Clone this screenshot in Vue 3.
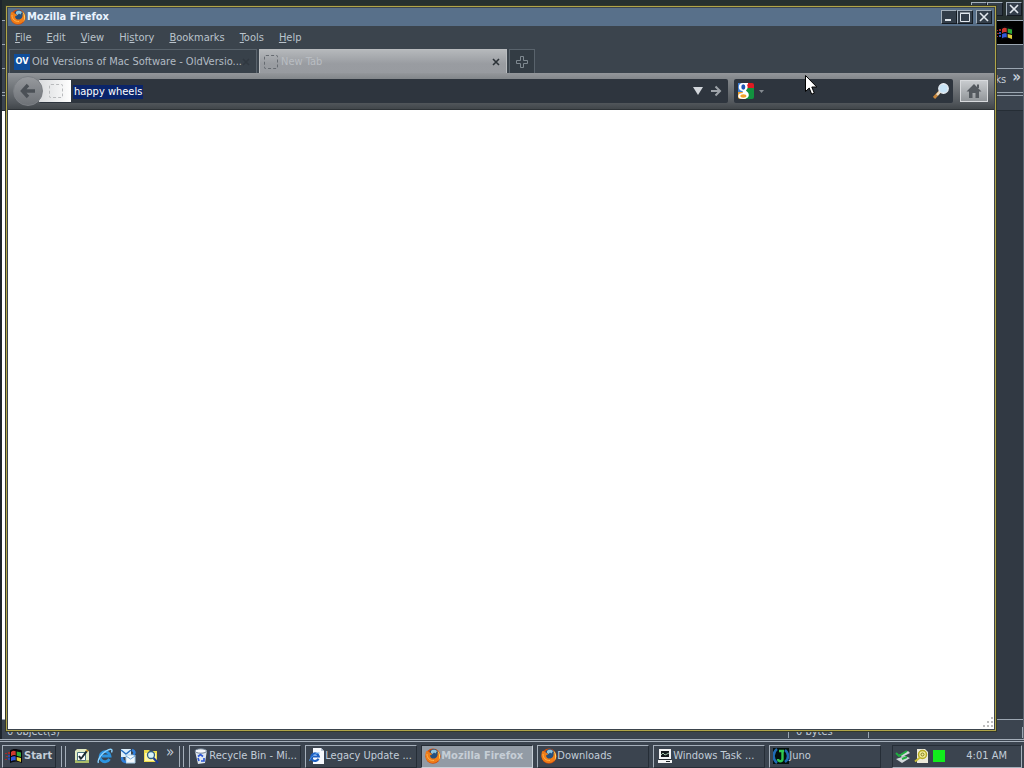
<script setup>
const menus = [
  { pre: '', key: 'F', post: 'ile' },
  { pre: '', key: 'E', post: 'dit' },
  { pre: '', key: 'V', post: 'iew' },
  { pre: 'Hi', key: 's', post: 'tory' },
  { pre: '', key: 'B', post: 'ookmarks' },
  { pre: '', key: 'T', post: 'ools' },
  { pre: '', key: 'H', post: 'elp' },
]
const tasks = [
  { icon: 'bin', label: 'Recycle Bin - Mi...' },
  { icon: 'iepage', label: 'Legacy Update ...' },
  { icon: 'firefox', label: 'Mozilla Firefox', active: true },
  { icon: 'firefox', label: 'Downloads' },
  { icon: 'computer', label: 'Windows Task ...' },
  { icon: 'juno', label: 'Juno' },
]
const quick = [
  { icon: 'desktop', label: 'Show Desktop' },
  { icon: 'ie', label: 'Internet Explorer' },
  { icon: 'mail', label: 'Outlook Express' },
  { icon: 'search', label: 'Search' },
]
</script>

<template>
  <svg class="defs" aria-hidden="true">
    <symbol id="firefox" viewBox="0 0 16 16">
      <circle cx="8" cy="8.200" r="7.600" fill="#cf4a08" />
      <path d="M8.500 1a6 6 0 0 1 4 9.800C9.500 13 4.500 11 4 7.500 3.600 4 5.500 1.300 8.500 1z" fill="#24507e" />
      <path d="M6 3c1-1.500 4-2 6 0L10.500 5.500 9 4.500 7.500 6 6 5z" fill="#8fc4dc" />
      <path d="M1.200 3c.7.500 1.300.4 1.900-.3.2 1 .9 1.700 2 1.800l2.200 1.700-2.300 1.300c.2 2.600 2.300 3.600 4.700 2.900C12.500 9.500 13 7 12.300 4.300c2.500 2 2.900 6 .7 8.500-3.500 3.500-9.300 2.600-11.500-1.300C.2 9 .2 6 1.200 3z" fill="#f07d18" />
      <path d="M12.300 2.500c3.300 2.500 3.800 7.300 1 10.500 1-2.500 1.200-5.500 0-8z" fill="#ffd35a" />
      <path d="M2 6c0 4 3 7 7 6.500" fill="none" stroke="#ffb24a" />
    </symbol>
    <symbol id="flag" viewBox="0 0 18 16">
      <path d="M0 5h2v1H0zM1 8h2v1H1zM0 11h2v1H0zM3 4h2v2H3z" fill="#a42a2a" />
      <path d="M3 7h2v2H3zM3 10h2v2H3z" fill="#2b4bb0" />
      <path d="M5 2.500C8 .500 11 .500 17 2.500V15C13 13 9 13 5 15z" fill="#06060a" />
      <path d="M6 4c1.700-1.500 3.200-1.600 4.700-.8V7.400C9.200 6.800 7.700 7 6 8.200z" fill="#cf3a2e" />
      <path d="M11.700 3.500l4.300 1V9l-4.300-1.200z" fill="#2fa83a" />
      <path d="M6 9.200c1.700-1.100 3.200-1.300 4.700-.7v4c-1.500-.5-3-.3-4.700.8z" fill="#3158d8" />
      <path d="M11.700 8.900l4.300 1v4l-4.300-1.300z" fill="#e2cf3a" />
    </symbol>
    <symbol id="desktop" viewBox="0 0 16 16">
      <path d="M1 3l2-2h11l1 3v11H1z" fill="#e3ecc4" />
      <path d="M1 12h14v3H1z" fill="#a9bb6a" />
      <path d="M3.500 4.500h8v8h-8z" fill="#fff" stroke="#4b7480" />
      <path d="M5.500 11.500L13 1l2 1-7.500 9.500z" fill="#1c2a30" />
      <path d="M12 2l2 1.500" stroke="#e4aa30" stroke-width="1.500" />
      <path d="M5 8l2 3" stroke="#1c2a30" stroke-width="2" />
    </symbol>
    <symbol id="ie" viewBox="0 0 16 16">
      <path d="M12.500 11A5 5 0 1 1 13 8H5" fill="none" stroke="#2c94e0" stroke-width="2.800" />
      <path d="M1.500 14.800C0 12.500 4 6 9 3s7-2 5.500 1.500" fill="none" stroke="#8bd2ff" stroke-width="1.400" />
    </symbol>
    <symbol id="mail" viewBox="0 0 16 16">
      <path d="M1 1h10v8H1z" fill="#dceefb" />
      <path d="M1 2l5 4 5-4" fill="none" stroke="#276fc2" stroke-width="1.500" />
      <path d="M6 7h9v8H6z" fill="#f2f8fd" stroke="#a9cde8" />
      <path d="M6 8l4.500 3L15 8" fill="none" stroke="#6ea8dc" />
      <path d="M12 2c3 1 3 3 1.500 5M2 9c0 3 1 5 4 5" fill="none" stroke="#2f7fdc" stroke-width="2.500" />
    </symbol>
    <symbol id="search" viewBox="0 0 16 16">
      <path d="M1 2h5l1 1h7v11H1z" fill="#eedc4c" />
      <path d="M2 5h11v8H2z" fill="#fff7a6" />
      <circle cx="8" cy="7" r="3.500" fill="#d7f3fb" stroke="#2f5e80" stroke-width="1.300" />
      <path d="M10.500 10l4.500 5" stroke="#1c3b94" stroke-width="2.200" />
    </symbol>
    <symbol id="bin" viewBox="0 0 16 16">
      <path d="M2 3l12-1-2 13-7 1z" fill="#dfe7ee" />
      <ellipse cx="7.800" cy="3" rx="5.800" ry="2.200" fill="#f5f7fa" stroke="#6c7d8f" />
      <path d="M5 8.500l2.500-2L10 8.500M11 10v3H8M6 13l-1-3" fill="none" stroke="#2b56d4" stroke-width="1.700" />
    </symbol>
    <symbol id="iepage" viewBox="0 0 16 16">
      <path d="M4 0h8l3 3v13H4z" fill="#f6f9fd" />
      <path d="M12 0v3h3" fill="#b9c7d8" />
      <path d="M9.500 10.800A3.800 3.800 0 1 1 9.800 8.500H3.500" fill="none" stroke="#1d5fc2" stroke-width="2.200" />
      <path d="M.8 13C-.2 11 6 4.500 10.500 5" fill="none" stroke="#4f9df0" />
    </symbol>
    <symbol id="computer" viewBox="0 0 16 16">
      <path d="M2 1h12v10H2zM1 12h14v3H1z" fill="#f2f3f4" />
      <path d="M4 3h8v6H4z" fill="#14181c" />
      <path d="M4 7l2-2 2 2 4-2" fill="none" stroke="#9ec0a6" />
      <path d="M2 11h12v1H2zM9 13h4v1H9z" fill="#22272c" />
    </symbol>
    <symbol id="juno" viewBox="0 0 16 16">
      <path d="M0 0h16v16H0z" fill="#04100c" />
      <path d="M4 1C0 4-1 11 4 15M12 2c4 3 4 9 0 12" fill="none" stroke="#1f6bb5" stroke-width="2.500" />
      <path d="M6 3h5M9.500 3v8c0 3-4.500 3-4.500 0" fill="none" stroke="#30c94f" stroke-width="2.400" />
    </symbol>
  </svg>

  <div class="desktop">
    <main class="stage">
      <section class="back" aria-label="Recycle Bin">
        <header class="back-title">
          <button class="cap" aria-label="Minimize Recycle Bin"></button>
          <button class="cap" aria-label="Maximize Recycle Bin"></button>
          <button class="cap last" aria-label="Close Recycle Bin">
            <svg viewBox="0 0 10 10" width="10" height="10"><path d="M1 1l8 8M9 1L1 9" stroke="#e2e8ee" stroke-width="1.600" /></svg>
          </button>
        </header>
        <div class="back-menu">
          <span class="throbber"><svg width="18" height="16"><use href="#flag" /></svg></span>
        </div>
        <div class="back-row"></div>
        <div class="back-links"><span>ks</span><b>»</b></div>
        <div class="back-address"></div>
        <div class="back-body"></div>
        <footer class="back-status"><span>0 object(s)</span><span>0 bytes</span><span></span></footer>
      </section>

      <section class="firefox" aria-label="Mozilla Firefox">
        <header class="title">
          <svg width="16" height="16"><use href="#firefox" /></svg>
          <h1>Mozilla Firefox</h1>
          <button class="cap" aria-label="Minimize"><svg viewBox="0 0 10 10" width="10" height="10"><path d="M1 8h6" stroke="#e2e8ee" stroke-width="2" /></svg></button>
          <button class="cap" aria-label="Maximize"><svg viewBox="0 0 10 10" width="10" height="10"><path d="M.5 1.500h9v8h-9zM0 1h10" fill="none" stroke="#e2e8ee" /></svg></button>
          <button class="cap last" aria-label="Close"><svg viewBox="0 0 10 10" width="10" height="10"><path d="M1 1l8 8M9 1L1 9" stroke="#e2e8ee" stroke-width="1.600" /></svg></button>
        </header>
        <nav class="menus">
          <button v-for="m in menus" :key="m.post">{{ m.pre }}<u>{{ m.key }}</u>{{ m.post }}</button>
        </nav>
        <div class="tabs">
          <div class="tab">
            <span class="ov">OV</span>
            <button class="tab-name">Old Versions of Mac Software - OldVersio...</button>
            <button class="tab-close" aria-label="Close tab"><svg viewBox="0 0 8 8" width="8" height="8"><path d="M1 1l6 6M7 1L1 7" stroke="#303840" stroke-width="1.500" /></svg></button>
          </div>
          <div class="tab current">
            <span class="blank"></span>
            <button class="tab-name">New Tab</button>
            <button class="tab-close" aria-label="Close tab"><svg viewBox="0 0 8 8" width="8" height="8"><path d="M1 1l6 6M7 1L1 7" stroke="#2c3238" stroke-width="1.600" /></svg></button>
          </div>
          <button class="newtab" aria-label="Open a new tab"><svg viewBox="0 0 12 12" width="12" height="12"><path d="M4.500.500h3v4h4v3h-4v4h-3v-4h-4v-3h4z" fill="none" stroke="#7f8990" /></svg></button>
        </div>
        <div class="toolbar">
          <button class="back-btn" aria-label="Back"><svg viewBox="0 0 16 16" width="16" height="16"><path d="M8 2L2.500 8 8 14M3 8h12" fill="none" stroke="#4b5056" stroke-width="3.400" /></svg></button>
          <div class="url">
            <span class="identity"><span class="blank"></span></span>
            <label class="field"><span class="picked">happy wheels</span><input aria-label="Address" /></label>
            <button class="plain" aria-label="Show history"><svg viewBox="0 0 10 8" width="10" height="8"><path d="M0 0h10L5 8z" fill="#d3d7dc" /></svg></button>
            <button class="plain go" aria-label="Go"><svg viewBox="0 0 12 12" width="12" height="12"><path d="M1 6h9M5.500 1.500L10 6l-4.500 4.500" fill="none" stroke="#9ea3a9" stroke-width="2" /></svg></button>
          </div>
          <div class="searchbox">
            <button class="plain engine" aria-label="Google">
              <svg viewBox="0 0 16 16" width="16" height="16">
                <path d="M0 0h9v9H0z" fill="#3f7fd6" />
                <path d="M9 0h5a2 2 0 0 1 2 2v3H9z" fill="#e01b22" />
                <path d="M8 5h8v9a2 2 0 0 1-2 2H8z" fill="#12923f" />
                <path d="M0 9h8v7H2a2 2 0 0 1-2-2z" fill="#f0a32c" />
                <path d="M10 0H5C2 0 .8 2 .8 4.200c0 2.300 1.700 3.800 4 3.800-.5 1 0 1.600.5 2C2 10 .2 11.200.2 13.200.2 15 2 16 5 16c3.500 0 5.800-1.600 5.800-4 0-1.900-1-2.800-2.200-3.700-.9-.7-.6-1.200.1-1.800C10 5.400 10 3 8.700 1.500H10z" fill="#fff" />
                <ellipse cx="5.300" cy="4" rx="2" ry="2.700" fill="#1f55b4" />
                <ellipse cx="5.400" cy="13" rx="3" ry="1.700" fill="#f0a32c" />
              </svg>
              <svg viewBox="0 0 5 3" width="5" height="3"><path d="M0 0h5L2.500 3z" fill="#858b91" /></svg>
            </button>
            <input aria-label="Search" />
            <button class="plain" aria-label="Go search"><svg viewBox="0 0 16 16" width="16" height="16"><path d="M6.500 9L1 15" stroke="#c7863c" stroke-width="3" /><path d="M7 8.500L4 12" stroke="#e8ddc8" stroke-width="2.500" /><circle cx="10.500" cy="5.500" r="4.700" fill="#c6e3f6" stroke="#e6edf3" stroke-width="1.400" /></svg></button>
          </div>
          <button class="home" aria-label="Home"><svg viewBox="0 0 16 16" width="16" height="16"><path d="M8 1l7.500 7.500H13V15H9.500v-5h-3v5H3V8.500H.5zM11 1.500h2V5h-2z" fill="#54595f" /></svg></button>
        </div>
        <article class="page">
          <svg viewBox="0 0 12 12" width="12" height="12"><path d="M9 0h2v2H9zM5 4h2v2H5zM9 4h2v2H9zM1 8h2v2H1zM5 8h2v2H5zM9 8h2v2H9z" fill="#bdbdbd" /></svg>
        </article>
      </section>

      <svg class="pointer" viewBox="0 0 12 20" width="12" height="20"><path d="M.5.500v16l3.700-3.500 2.500 6.200 2.600-1.100L6.800 12h5z" fill="#fff" stroke="#000" /></svg>
    </main>

    <footer class="taskbar">
      <button class="start"><svg width="18" height="16"><use href="#flag" /></svg>Start</button>
      <span class="grip"></span>
      <nav class="quick">
        <button v-for="q in quick" :key="q.icon" class="plain" :aria-label="q.label"><svg width="16" height="16"><use :href="'#' + q.icon" /></svg></button>
        <button class="plain more" aria-label="More">»</button>
      </nav>
      <span class="grip"></span>
      <nav class="tasks">
        <button v-for="t in tasks" :key="t.label" class="task" :class="{ active: t.active }">
          <svg width="16" height="16"><use :href="'#' + t.icon" /></svg><span>{{ t.label }}</span>
        </button>
      </nav>
      <div class="tray">
        <svg viewBox="0 0 16 16" width="16" height="16"><path d="M1 11l9-3 5 2-8 5zM4 7l9-4 2 2-8 4z" fill="#d3d9dc" /><path d="M1 5l3 3 8-5M7 11l5-2" fill="none" stroke="#1fae3f" stroke-width="2" /></svg>
        <svg viewBox="0 0 16 16" width="16" height="16"><path d="M3 1h8l3 3v11H3z" fill="#eceadb" /><circle cx="8.500" cy="6.500" r="4" fill="#f2ee9a" stroke="#b5a921" stroke-width="1.500" /><circle cx="8.500" cy="6.500" r="1.500" fill="none" stroke="#857b1c" /><path d="M6 9.500l-5 4" stroke="#c9bd33" stroke-width="2" /></svg>
        <span class="green"></span>
        <time>4:01 AM</time>
      </div>
    </footer>
  </div>
</template>

<style>
html, body { margin: 0; background: #3b444f; }
</style>

<style scoped>
.defs { position: absolute; width: 0; height: 0; }
.desktop {
  display: flex; flex-direction: column; min-height: 100vh; overflow: hidden;
  font: 11px/14px Tahoma, "DejaVu Sans Condensed", "Noto Sans", sans-serif;
  color: #c3ced9; background: #3b444f;
}
.desktop * { box-sizing: border-box; }
button, input { font: inherit; color: inherit; background: none; border: 0; padding: 0; margin: 0; }
svg { display: block; flex: none; }
.stage { flex: 1; display: grid; position: relative; }
.back, .firefox { grid-area: 1 / 1; display: flex; flex-direction: column; min-width: 0; }

.back { background: #3b444f; border-right: 1px solid #59636e; border-left: 2px solid #1d242c; }
.back-title { display: flex; justify-content: flex-end; height: 20px; padding: 2px 1px; background: #26302f; }
.cap {
  width: 16px; height: 14px; display: flex; align-items: center; justify-content: center;
  background: #333e4a; border: 1px solid #151b22; border-top-color: #a3afbb; border-left-color: #a3afbb;
}
.cap.last { margin-left: 3px; }
.back-menu { height: 25px; display: flex; justify-content: flex-end; border-top: 1px solid #9ba6b1; border-bottom: 1px solid #9ba6b1; }
.throbber { width: 27px; background: #000; display: flex; align-items: center; }
.back-row { height: 23px; }
.back-links { height: 25px; display: flex; justify-content: flex-end; gap: 6px; border-top: 1px solid #9ba6b1; border-bottom: 1px solid #9ba6b1; padding: 4px 2px; }
.back-links b { font-size: 15px; line-height: 8px; }
.back-address { height: 16px; margin-top: 2px; border-top: 1px solid #9ba6b1; border-bottom: 1px solid #252d35; }
.back-body { flex: 1; background: linear-gradient(90deg, #fff 6px, #313943 6px); }
.back-status { height: 20px; display: grid; grid-template-columns: 787px 78px 1fr; gap: 2px; border-top: 1px solid #9ba6b1; padding: 7px 0 2px; }
.back-status span { border-right: 1px solid #9ba6b1; padding-left: 5px; line-height: 10px; height: 11px; }

.firefox { margin: 5px 27px 7px 5px; border: 1px solid #33372b; outline: 1px solid #b0a548; outline-offset: -2px; padding: 2px; background: #3b444d; z-index: 1; }
.title { display: flex; align-items: center; height: 18px; padding: 0 2px; background: #58708a; }
.title h1 { flex: 1; margin: 0 0 0 1px; font-size: 11px; line-height: 14px; color: #eaf4ff; }
.menus { display: flex; gap: 15px; height: 23px; padding: 0 7px; align-items: center; color: #bac3cb; }
.tabs { display: flex; height: 24px; padding-left: 1px; gap: 2px; }
.tab { width: 248px; display: flex; align-items: center; padding: 0 6px 0 4px; border: 1px solid #59636c; border-bottom: 0; background: #38414a; color: #b2bbc3; }
.ov { width: 16px; height: 16px; margin-right: 2px; font-weight: bold; font-size: 9px; line-height: 15px; text-align: center; color: #fff; background: #0f4d9a; }
.tab-name { flex: 1; text-align: left; white-space: nowrap; overflow: hidden; }
.tab.current { background: linear-gradient(#b5b8bb, #999ca1 60%, #989ba0); border-color: #b9bcbf; color: #b9bdc2; }
.blank { width: 14px; height: 14px; flex: none; border: 1px dashed #666b71; border-radius: 2px; }
.current .blank { margin-right: 3px; }
.newtab { width: 26px; display: flex; align-items: center; justify-content: center; border: 1px solid #59636c; border-bottom: 0; background: #333c44; }
.toolbar { display: flex; align-items: center; height: 37px; padding: 0 6px 0 5px; background: linear-gradient(#94979b 0, #85898d 5px, #51565b 30px, #41464a); border-bottom: 1px solid #2e3337; }
.back-btn { width: 30px; height: 30px; flex: none; z-index: 1; border-radius: 50%; border: 1px solid #7b7f84; background: linear-gradient(#96999d, #6e7277); display: flex; align-items: center; justify-content: center; }
.url { flex: 1; height: 24px; margin-left: -4px; display: flex; align-items: center; background: #2e353e; border-radius: 2px; padding-right: 6px; min-width: 0; }
.identity { width: 32px; height: 22px; padding: 4px 10px; background: linear-gradient(90deg, #dadcde, #fff); }
.identity .blank { display: block; border-color: #b9bbbd; }
.field { flex: 1; display: flex; margin-left: 2px; padding-top: 2px; min-width: 0; }
.picked { background: #0a246a; color: #fff; padding: 0 1px; white-space: nowrap; }
.field input { flex: 1; min-width: 0; }
.plain { display: flex; align-items: center; }
.go { margin-left: 7px; }
.searchbox { width: 219px; height: 24px; margin: 0 7px 0 6px; padding: 0 4px; display: flex; align-items: center; background: #2e353e; border-radius: 2px; }
.searchbox input { flex: 1; min-width: 0; }
.engine { gap: 5px; }
.home { width: 28px; height: 22px; display: flex; align-items: center; justify-content: center; background: linear-gradient(#c8cbce, #92969a); border: 1px solid #d8dadd; }
.page { flex: 1; background: #fff; display: flex; align-items: flex-end; justify-content: flex-end; }
.pointer { position: absolute; left: 805px; top: 75px; z-index: 2; }

.taskbar { height: 29px; display: flex; align-items: center; gap: 5px; border-top: 3px double #a5afba; padding: 2px 2px 0; background: #3b444f; }
.start { width: 54px; height: 23px; display: flex; align-items: center; gap: 1px; padding-left: 2px; font-weight: bold; border: 1px solid #222a33; border-top-color: #a5afba; border-left-color: #a5afba; }
.grip { width: 5px; height: 21px; border-left: 1px solid #a5afba; border-right: 1px solid #a5afba; }
.quick { display: flex; gap: 7px; padding-left: 3px; }
.more { align-self: flex-start; font-size: 15px; line-height: 8px; }
.tasks { flex: 1; display: flex; gap: 4px; min-width: 0; }
.task { width: 112px; height: 23px; display: flex; align-items: center; gap: 0; padding-left: 3px; white-space: pre; overflow: hidden; border: 1px solid #252d36; border-top-color: #a5afba; border-left-color: #a5afba; }
.task.active { background: #929ba5; color: #c6ced6; font-weight: bold; border-color: #252d36 #c8d0d8 #c8d0d8 #252d36; }
.tray { width: 130px; height: 23px; display: flex; align-items: center; gap: 3px; padding: 0 14px 0 2px; border: 1px solid #a5afba; border-top-color: #252d36; border-left-color: #252d36; }
.green { width: 12px; height: 12px; background: #11ed1c; }
.tray time { margin-left: auto; }
</style>
